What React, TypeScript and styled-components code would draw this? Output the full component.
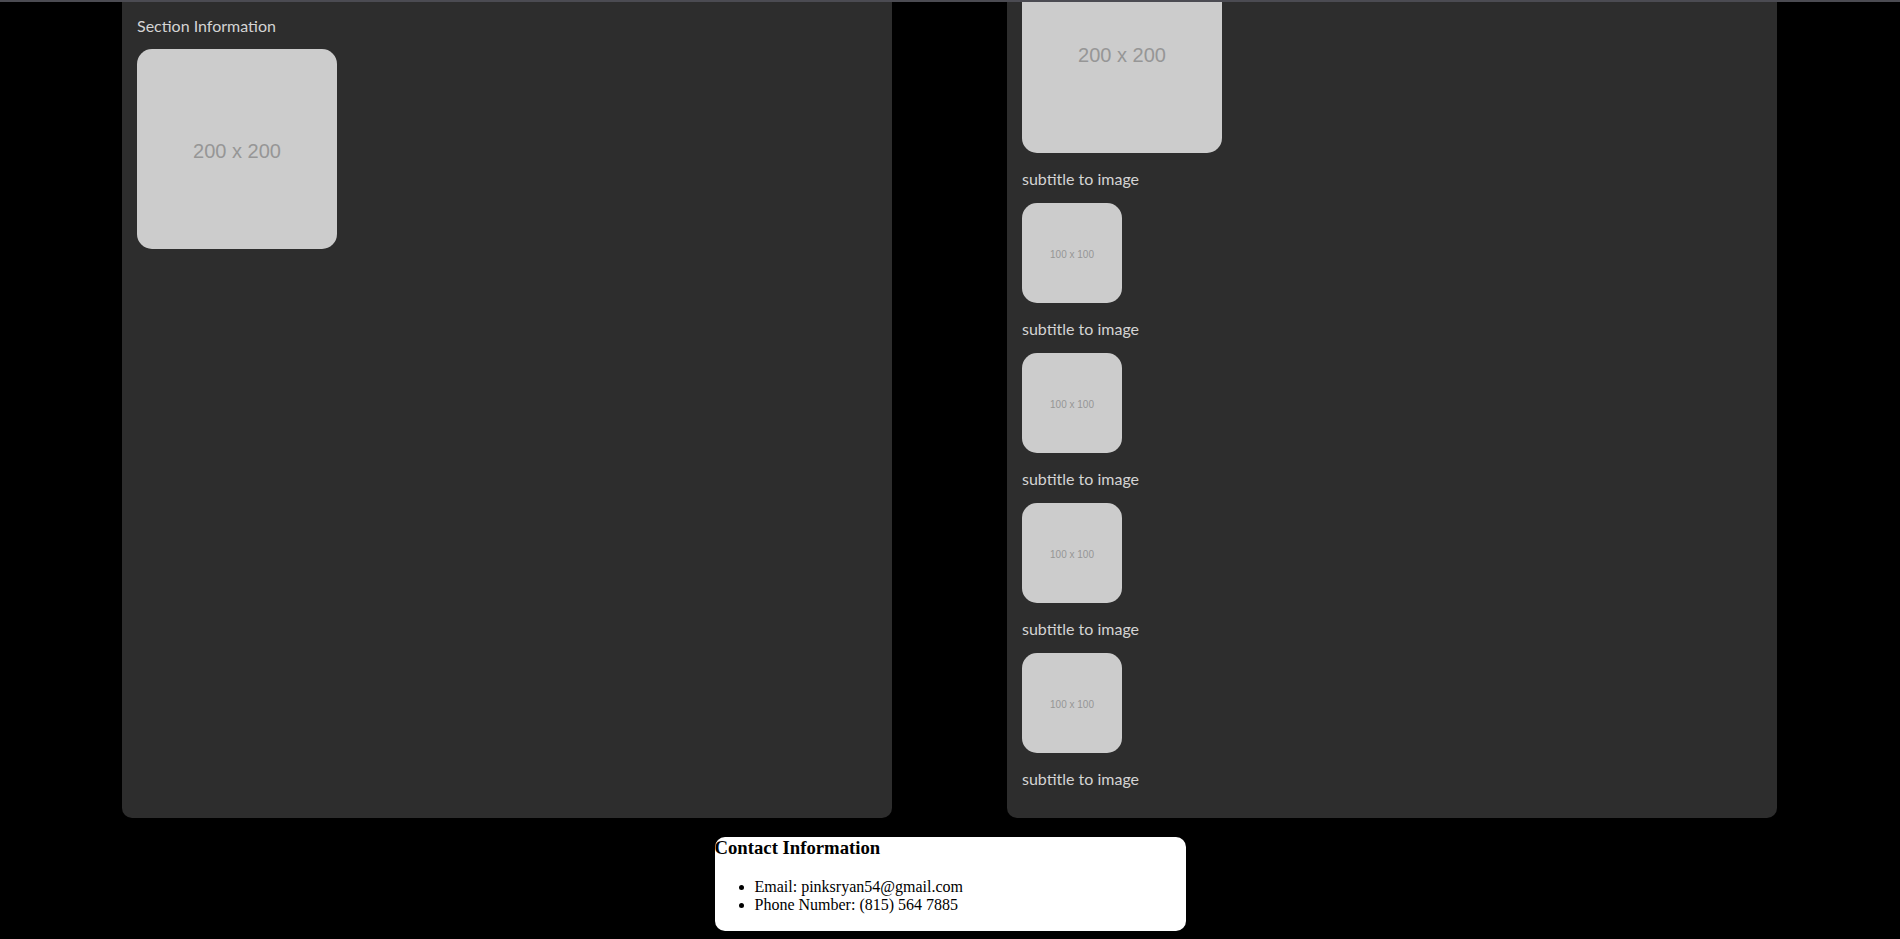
import React from 'react';
import styled, { createGlobalStyle } from 'styled-components';

const GlobalStyle = createGlobalStyle`
  html, body {
    margin: 0;
    padding: 0;
    background: #000;
    overflow: hidden;
  }
`;

// the page is shown scrolled to its bottom, so the view is bottom-aligned
const Viewport = styled.div`
  height: 100vh;
  display: flex;
  flex-direction: column;
  overflow: hidden;
  padding-bottom: 8px;
  box-sizing: border-box;
  font-family: "Trebuchet MS", Lato, sans-serif;
`;

const TopEdge = styled.div`
  position: fixed;
  top: 0;
  left: 0;
  right: 0;
  height: 2px;
  background: #4b4b52;
  z-index: 2;
`;

const PanelRow = styled.div`
  flex: 1;
  min-height: 0;
  display: flex;
  padding-left: 122px;
  gap: 115px;
`;

const Panel = styled.section<{ $bottomAligned?: boolean }>`
  width: 770px;
  box-sizing: border-box;
  background: #2d2d2d;
  border-radius: 0 0 10px 10px;
  padding: ${p => (p.$bottomAligned ? '0 15px 15px' : '16px 15px 15px')};
  display: flex;
  flex-direction: column;
  justify-content: ${p => (p.$bottomAligned ? 'flex-end' : 'flex-start')};
  overflow: hidden;
  color: #d4d4d4;
`;

const PanelTitle = styled.h2`
  margin: 0 0 14px;
  font-size: 16px;
  font-weight: normal;
  line-height: 19px;
`;

const Placeholder = styled.div<{ $size: number }>`
  flex: none;
  width: ${p => p.$size}px;
  height: ${p => p.$size}px;
  box-sizing: border-box;
  padding-top: ${p => p.$size / 50}px;
  border-radius: 15px;
  background: #cccccc;
  color: #969696;
  display: flex;
  align-items: center;
  justify-content: center;
  font-family: "Liberation Sans", Arial, sans-serif;
  font-size: ${p => p.$size / 10}px;
`;

const Subtitle = styled.p`
  margin: 16px 0 14px;
  font-size: 16px;
  line-height: 20px;
`;

const ContactCard = styled.div`
  width: 471px;
  height: 94px;
  margin: 19px auto 0;
  flex: none;
  background: #fff;
  border-radius: 10px;
  color: #000;
  font-family: "Liberation Serif", "Times New Roman", serif;
  font-size: 16px;
`;

const ContactTitle = styled.h3`
  margin: 0 0 18.72px;
  font-size: 18.72px;
  font-weight: bold;
`;

const ContactList = styled.ul`
  margin: 0;
  padding-left: 40px;
`;

const gallery = [200, 100, 100, 100, 100];

export default function App() {
  return (
    <>
      <GlobalStyle />
      <TopEdge />
      <Viewport>
        <PanelRow>
          <Panel>
            <PanelTitle>Section Information</PanelTitle>
            <Placeholder $size={200}>200 x 200</Placeholder>
          </Panel>
          <Panel $bottomAligned>
            {gallery.map((size, i) => (
              <React.Fragment key={i}>
                <Placeholder $size={size}>{`${size} x ${size}`}</Placeholder>
                <Subtitle>subtitle to image</Subtitle>
              </React.Fragment>
            ))}
          </Panel>
        </PanelRow>
        <ContactCard>
          <ContactTitle>Contact Information</ContactTitle>
          <ContactList>
            <li>Email: pinksryan54@gmail.com</li>
            <li>Phone Number: (815) 564 7885</li>
          </ContactList>
        </ContactCard>
      </Viewport>
    </>
  );
}
